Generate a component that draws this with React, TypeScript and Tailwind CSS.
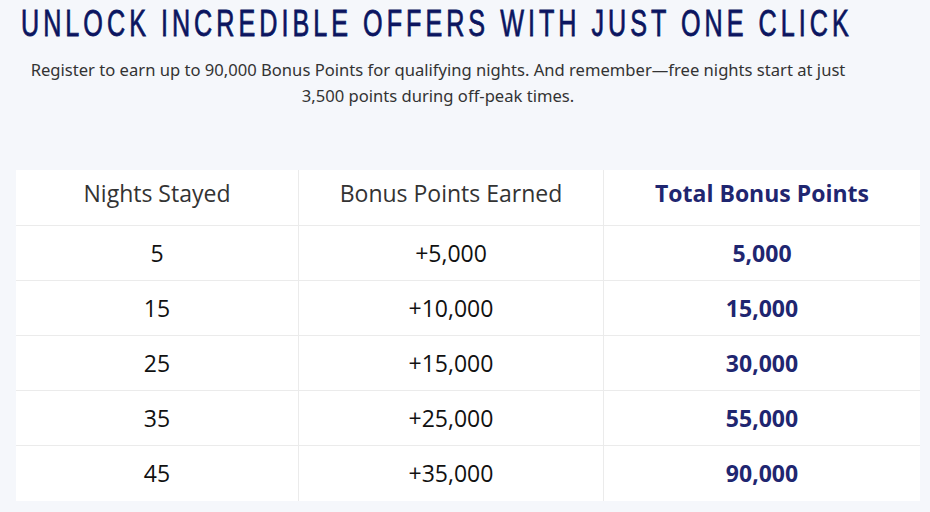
import React from "react";

const rows = [
  ["5", "+5,000", "5,000"],
  ["15", "+10,000", "15,000"],
  ["25", "+15,000", "30,000"],
  ["35", "+25,000", "55,000"],
  ["45", "+35,000", "90,000"],
];

export default function App() {
  return (
    <div className="w-[930px] h-[512px] bg-[#f5f7fb] overflow-hidden">
      <div className="pl-[21px] pt-[5px] h-[43px]">
        <h1
          className="inline-block origin-left scale-x-[0.68] text-[37px] leading-[38px] tracking-[5.9px] text-[#0b1560] whitespace-nowrap [-webkit-text-stroke:0.8px_#0b1560]"
          style={{ fontFamily: '"Liberation Sans", sans-serif' }}
        >
          UNLOCK INCREDIBLE OFFERS WITH JUST ONE CLICK
        </h1>
      </div>
      <p
        className="mt-[14px] w-[876px] text-center text-[16.6px] leading-[26px] text-[#333333]"
        style={{ fontFamily: '"Noto Sans", sans-serif' }}
      >
        Register to earn up to 90,000 Bonus Points for qualifying nights. And remember—free nights start at just
        <br />
        3,500 points during off-peak times.
      </p>
      <div
        className="mt-[61px] ml-[16px] w-[904px] bg-white grid grid-cols-[283px_305px_316px]"
        style={{ fontFamily: '"Open Sans", "Noto Sans", sans-serif' }}
      >
        <div className="h-[56px] pb-[8px] flex items-center justify-center text-[23px] text-[#333333] border-r border-b border-[#ebebeb]">
          Nights Stayed
        </div>
        <div className="h-[56px] pb-[8px] flex items-center justify-center text-[23px] text-[#333333] border-r border-b border-[#ebebeb]">
          Bonus Points Earned
        </div>
        <div className="h-[56px] pb-[8px] flex items-center justify-center text-[23px] font-bold text-[#1f2670] border-b border-[#ebebeb]">
          Total Bonus Points
        </div>
        {rows.map((r, i) => (
          <React.Fragment key={i}>
            <div
              className={`h-[55px] flex items-center justify-center text-[23px] text-[#111111] border-r border-[#ebebeb] ${i < 4 ? "border-b" : ""}`}
            >
              {r[0]}
            </div>
            <div
              className={`h-[55px] flex items-center justify-center text-[23px] text-[#111111] border-r border-[#ebebeb] ${i < 4 ? "border-b" : ""}`}
            >
              {r[1]}
            </div>
            <div
              className={`h-[55px] flex items-center justify-center text-[23px] font-bold text-[#1f2670] border-[#ebebeb] ${i < 4 ? "border-b" : ""}`}
            >
              {r[2]}
            </div>
          </React.Fragment>
        ))}
      </div>
    </div>
  );
}
